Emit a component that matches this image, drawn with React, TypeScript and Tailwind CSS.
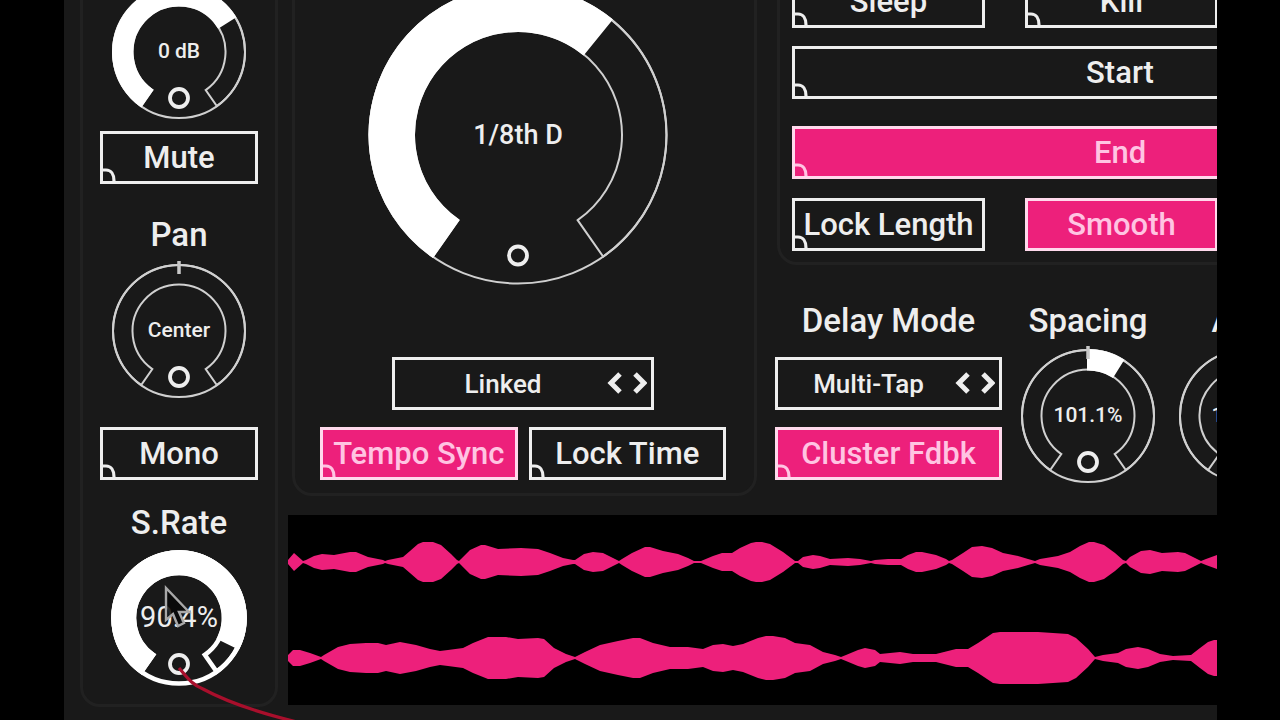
import { useState } from 'react';
import type { ReactNode } from 'react';
import { clsx } from 'clsx';

type Point = [number, number];

interface DialProps {
  name: string;
  text: string;
  from?: number;
  to: number;
  size?: 'small' | 'large';
  bold?: boolean;
  centered?: boolean;
}

const SWEEP = 145;

// [x, half height] pairs for each channel of the buffer
const leftChannel: Point[] = [
  [0, 2], [6, 9], [15, 1], [18, 2], [26, 6], [34, 8], [46, 7], [62, 10], [68, 10], [80, 5], [95, 2], [97, 1],
  [100, 2], [115, 5], [122, 11], [130, 18], [135, 20], [145, 20], [153, 17], [163, 8], [169, 2], [171, 1],
  [173, 3], [182, 12], [193, 17], [197, 17], [210, 13], [233, 14], [250, 13], [262, 9], [275, 4], [285, 2],
  [287, 2], [296, 8], [305, 10], [315, 9], [325, 4], [331, 1], [334, 3], [344, 9], [357, 15], [362, 15],
  [375, 11], [390, 8], [400, 4], [406, 1], [413, 1], [425, 6], [434, 9], [444, 9], [452, 14], [463, 19],
  [468, 20], [474, 20], [482, 18], [495, 10], [507, 1], [510, 1], [515, 5], [525, 7], [532, 6], [542, 3],
  [560, 4], [572, 3], [583, 1], [587, 2], [600, 3], [613, 3], [620, 7], [628, 10], [634, 10], [648, 7],
  [658, 3], [661, 1], [664, 2], [675, 9], [684, 15], [694, 16], [704, 14], [715, 9], [730, 6], [740, 3],
  [747, 1], [752, 3], [770, 6], [782, 10], [792, 16], [801, 20], [806, 20], [816, 17], [827, 9], [835, 2],
  [838, 1], [842, 5], [853, 11], [862, 12], [874, 9], [890, 10], [897, 9], [907, 4], [913, 1], [918, 3], [929, 7],
];

const rightChannel: Point[] = [
  [0, 3], [5, 8], [12, 8], [22, 5], [33, 1], [36, 3], [50, 11], [62, 14], [78, 15], [90, 15], [98, 13],
  [112, 16], [128, 13], [142, 9], [152, 7], [160, 8], [175, 10], [185, 15], [200, 21], [218, 21], [230, 19],
  [250, 20], [256, 19], [266, 10], [278, 4], [287, 1], [297, 6], [312, 13], [330, 17], [345, 20], [352, 20],
  [365, 15], [382, 11], [400, 11], [415, 9], [425, 13], [435, 14], [445, 12], [455, 14], [470, 20], [478, 22],
  [485, 22], [497, 20], [507, 15], [522, 13], [535, 6], [547, 3], [553, 1], [558, 3], [570, 8], [577, 10],
  [587, 8], [592, 4], [612, 6], [625, 4], [648, 4], [660, 7], [668, 9], [680, 9], [690, 15], [705, 25],
  [712, 26], [750, 26], [780, 24], [788, 20], [800, 9], [807, 1], [815, 3], [830, 5], [838, 9], [850, 11],
  [860, 9], [872, 4], [885, 2], [903, 3], [912, 10], [920, 16], [926, 18], [929, 18],
];

function envelope(points: Point[], middle: number) {
  const top = points.map(([x, h]) => `${x},${middle - h}`);
  const bottom = [...points].reverse().map(([x, h]) => `${x},${middle + h}`);
  return [...top, ...bottom].join(' ');
}

function polar(center: number, radius: number, degrees: number) {
  const rad = (degrees * Math.PI) / 180;
  return `${center + radius * Math.sin(rad)} ${center - radius * Math.cos(rad)}`;
}

function sector(center: number, outer: number, inner: number, from: number, to: number) {
  const large = to - from > 180 ? 1 : 0;
  return [
    `M ${polar(center, outer, from)}`,
    `A ${outer} ${outer} 0 ${large} 1 ${polar(center, outer, to)}`,
    `L ${polar(center, inner, to)}`,
    `A ${inner} ${inner} 0 ${large} 0 ${polar(center, inner, from)}`,
    'Z',
  ].join(' ');
}

function Dial({ name, text, from = -SWEEP, to, size = 'small', bold, centered }: DialProps) {
  const large = size === 'large';
  const box = large ? 300 : 136;
  const c = box / 2;
  const outer = large ? 148.5 : bold ? 65.5 : 66;
  const inner = large ? 104 : bold ? 45 : 46.5;
  const stroke = bold ? 4.5 : 2;

  return (
    <div className="relative grid shrink-0 place-items-center text-[#eeeeee]">
      <svg
        viewBox={`0 0 ${box} ${box}`}
        className={clsx('col-start-1 row-start-1 overflow-visible', large ? 'size-[300px]' : 'size-[136px]')}
        fill="none"
        stroke={bold ? '#fff' : '#d0d0d0'}
        aria-hidden="true"
      >
        <circle cx={c} cy={c} r={outer} strokeWidth={stroke} />
        <path d={sector(c, outer, inner, -SWEEP, SWEEP)} strokeWidth={stroke} />
        {to !== from && (
          <path d={sector(c, outer, inner, from, to)} fill="#fff" stroke="#fff" strokeWidth={stroke} />
        )}
        {centered && <path d={`M ${c} -2 V 11`} stroke="#c8c8c8" strokeWidth="3.5" />}
        <circle cx={c} cy={large ? c + 120.5 : c + 46} r="9" stroke="#eee" strokeWidth="3.8" />
      </svg>
      <span
        className={clsx(
          'col-start-1 row-start-1',
          large ? 'text-[27px] font-medium' : bold ? 'text-[29px]' : 'text-[21px] font-medium',
        )}
      >
        {text}
      </span>
      <input
        type="range"
        aria-label={name}
        min={-SWEEP}
        max={SWEEP}
        defaultValue={to}
        className="absolute inset-0 cursor-pointer opacity-0"
      />
    </div>
  );
}

function Toggle({ children, on = false, learn = true, className }: { children: ReactNode; on?: boolean; learn?: boolean; className?: string }) {
  const [active, setActive] = useState(on);

  return (
    <button
      type="button"
      aria-pressed={active}
      onClick={() => setActive(!active)}
      className={clsx(
        'relative h-[53px] shrink-0 overflow-hidden border-[3px] text-[31px] leading-none font-medium whitespace-nowrap',
        active ? 'border-[#ffd9ec] bg-[#ed207b] text-[#ffc4e2]' : 'border-[#eeeeee] text-[#eeeeee]',
        className,
      )}
    >
      {children}
      {learn && (
        <svg viewBox="0 0 14 14" className="absolute bottom-0 left-0 size-[14px]" fill="none" aria-hidden="true">
          <path d="M0 3 H3 C8 3 11 7 11 14" stroke="currentColor" strokeWidth="3.2" />
        </svg>
      )}
    </button>
  );
}

function Chooser({ name, options, className }: { name: string; options: string[]; className: string }) {
  return (
    <div className={clsx('relative h-[53px] shrink-0 border-[3px] border-[#eeeeee] text-[#eeeeee]', className)}>
      <select
        aria-label={name}
        className="size-full appearance-none bg-transparent pr-10 text-[26px] leading-none font-medium [text-align-last:center]"
      >
        {options.map(option => (
          <option key={option}>{option}</option>
        ))}
      </select>
      <svg
        viewBox="0 0 40 22"
        className="pointer-events-none absolute top-3 right-1 h-[22px] w-10"
        fill="none"
        stroke="currentColor"
        strokeWidth="5"
        aria-hidden="true"
      >
        <path d="M13 2 L4 11 L13 20 M28 2 L37 11 L28 20" />
      </svg>
    </div>
  );
}

function Label({ children }: { children: ReactNode }) {
  return (
    <div className="h-10 text-center text-[33px] leading-10 font-medium whitespace-nowrap text-[#eeeeee]">{children}</div>
  );
}

export default function App() {
  return (
    <div className="min-h-screen overflow-hidden bg-black font-['Roboto','Liberation_Sans',sans-serif]">
      <main className="-mt-8 mr-[63px] ml-16 flex gap-2.5 overflow-hidden bg-[#191919] pb-[13px] pl-4">
        {/* Output strip */}
        <section className="flex w-[198px] shrink-0 flex-col items-center rounded-[20px] border-[3px] border-[#212121] pt-[13px] pb-[18px]">
          <Dial name="Volume" text="0 dB" to={58} />
          <Toggle className="mt-[11px] w-[158px]">Mute</Toggle>

          <div className="mt-[31px] flex flex-col gap-2">
            <Label>Pan</Label>
            <Dial name="Pan" text="Center" from={0} to={0} centered />
          </div>
          <Toggle className="mt-7 w-[158px]">Mono</Toggle>

          <div className="relative mt-[23px] flex flex-col gap-[7px]">
            <Label>S.Rate</Label>
            <Dial name="Sample rate" text="90.4%" to={116} bold />
            {/* Patch cable and pointer */}
            <svg
              viewBox="0 0 180 180"
              className="pointer-events-none absolute top-[47px] left-0 size-[180px] overflow-visible"
              fill="none"
              aria-hidden="true"
            >
              <path d="M68 118 C76 127 80 134 92 139 C118 153 148 163 190 173" stroke="#a80f2c" strokeWidth="3.2" />
              <path
                d="M55 38 V70 L62 64 L67 76 L73 73 L68 62 H78 Z"
                fill="#080808"
                fillOpacity="0.85"
                stroke="#a8a8a8"
                strokeWidth="2.4"
              />
            </svg>
          </div>
        </section>

        <div className="min-w-0 flex-1">
          <div className="flex gap-[18px] pl-1">
            {/* Delay time */}
            <section className="w-[465px] shrink-0 rounded-[20px] border-[3px] border-[#212121] pt-[14px] pb-[13px] pl-[25px]">
              <div className="flex w-[406px] flex-col items-center">
                <div className="pr-2.5">
                  <Dial name="Delay time" text="1/8th D" to={39} size="large" />
                </div>
                <Chooser name="Channel link" options={['Linked']} className="mt-[72px] w-[262px]" />
                <div className="mt-[17px] flex w-full gap-[11px]">
                  <Toggle on className="flex-1">Tempo Sync</Toggle>
                  <Toggle className="flex-1">Lock Time</Toggle>
                </div>
              </div>
            </section>

            <div className="min-w-0 flex-1 overflow-hidden">
              {/* Buffer controls */}
              <section className="ml-0.5 w-[686px] rounded-[20px] border-[3px] border-[#212121] px-3 pt-1 pb-[11px]">
                <div className="flex gap-10">
                  <Toggle className="w-[193px]">Sleep</Toggle>
                  <Toggle className="w-[193px]">Kill</Toggle>
                </div>
                <Toggle className="mt-[18px] block w-full">Start</Toggle>
                <Toggle on className="mt-[27px] block w-full">End</Toggle>
                <div className="mt-[19px] flex gap-10">
                  <Toggle className="w-[193px]">Lock Length</Toggle>
                  <Toggle on learn={false} className="w-[193px]">Smooth</Toggle>
                </div>
              </section>

              {/* Delay mode */}
              <section className="mt-9 flex gap-[18px]">
                <div className="flex w-[227px] shrink-0 flex-col">
                  <Label>Delay Mode</Label>
                  <Chooser name="Delay mode" options={['Multi-Tap']} className="mt-4" />
                  <Toggle on className="mt-[17px]">Cluster Fdbk</Toggle>
                </div>
                <div className="flex gap-[22px]">
                  <div className="flex flex-col gap-[7px]">
                    <Label>Spacing</Label>
                    <Dial name="Spacing" text="101.1%" from={0} to={32} centered />
                  </div>
                  <div className="flex flex-col gap-[7px]">
                    <Label>Amp</Label>
                    <Dial name="Amp" text="100.0%" from={0} to={0} centered />
                  </div>
                </div>
              </section>
            </div>
          </div>

          {/* Buffer view */}
          <svg
            viewBox="0 0 929 190"
            preserveAspectRatio="none"
            className="mt-[19px] block h-[190px] w-full bg-black"
            fill="#ed207b"
            role="img"
            aria-label="Buffer"
          >
            <polygon points={envelope(leftChannel, 47)} />
            <polygon points={envelope(rightChannel, 143)} />
          </svg>
        </div>
      </main>
    </div>
  );
}
